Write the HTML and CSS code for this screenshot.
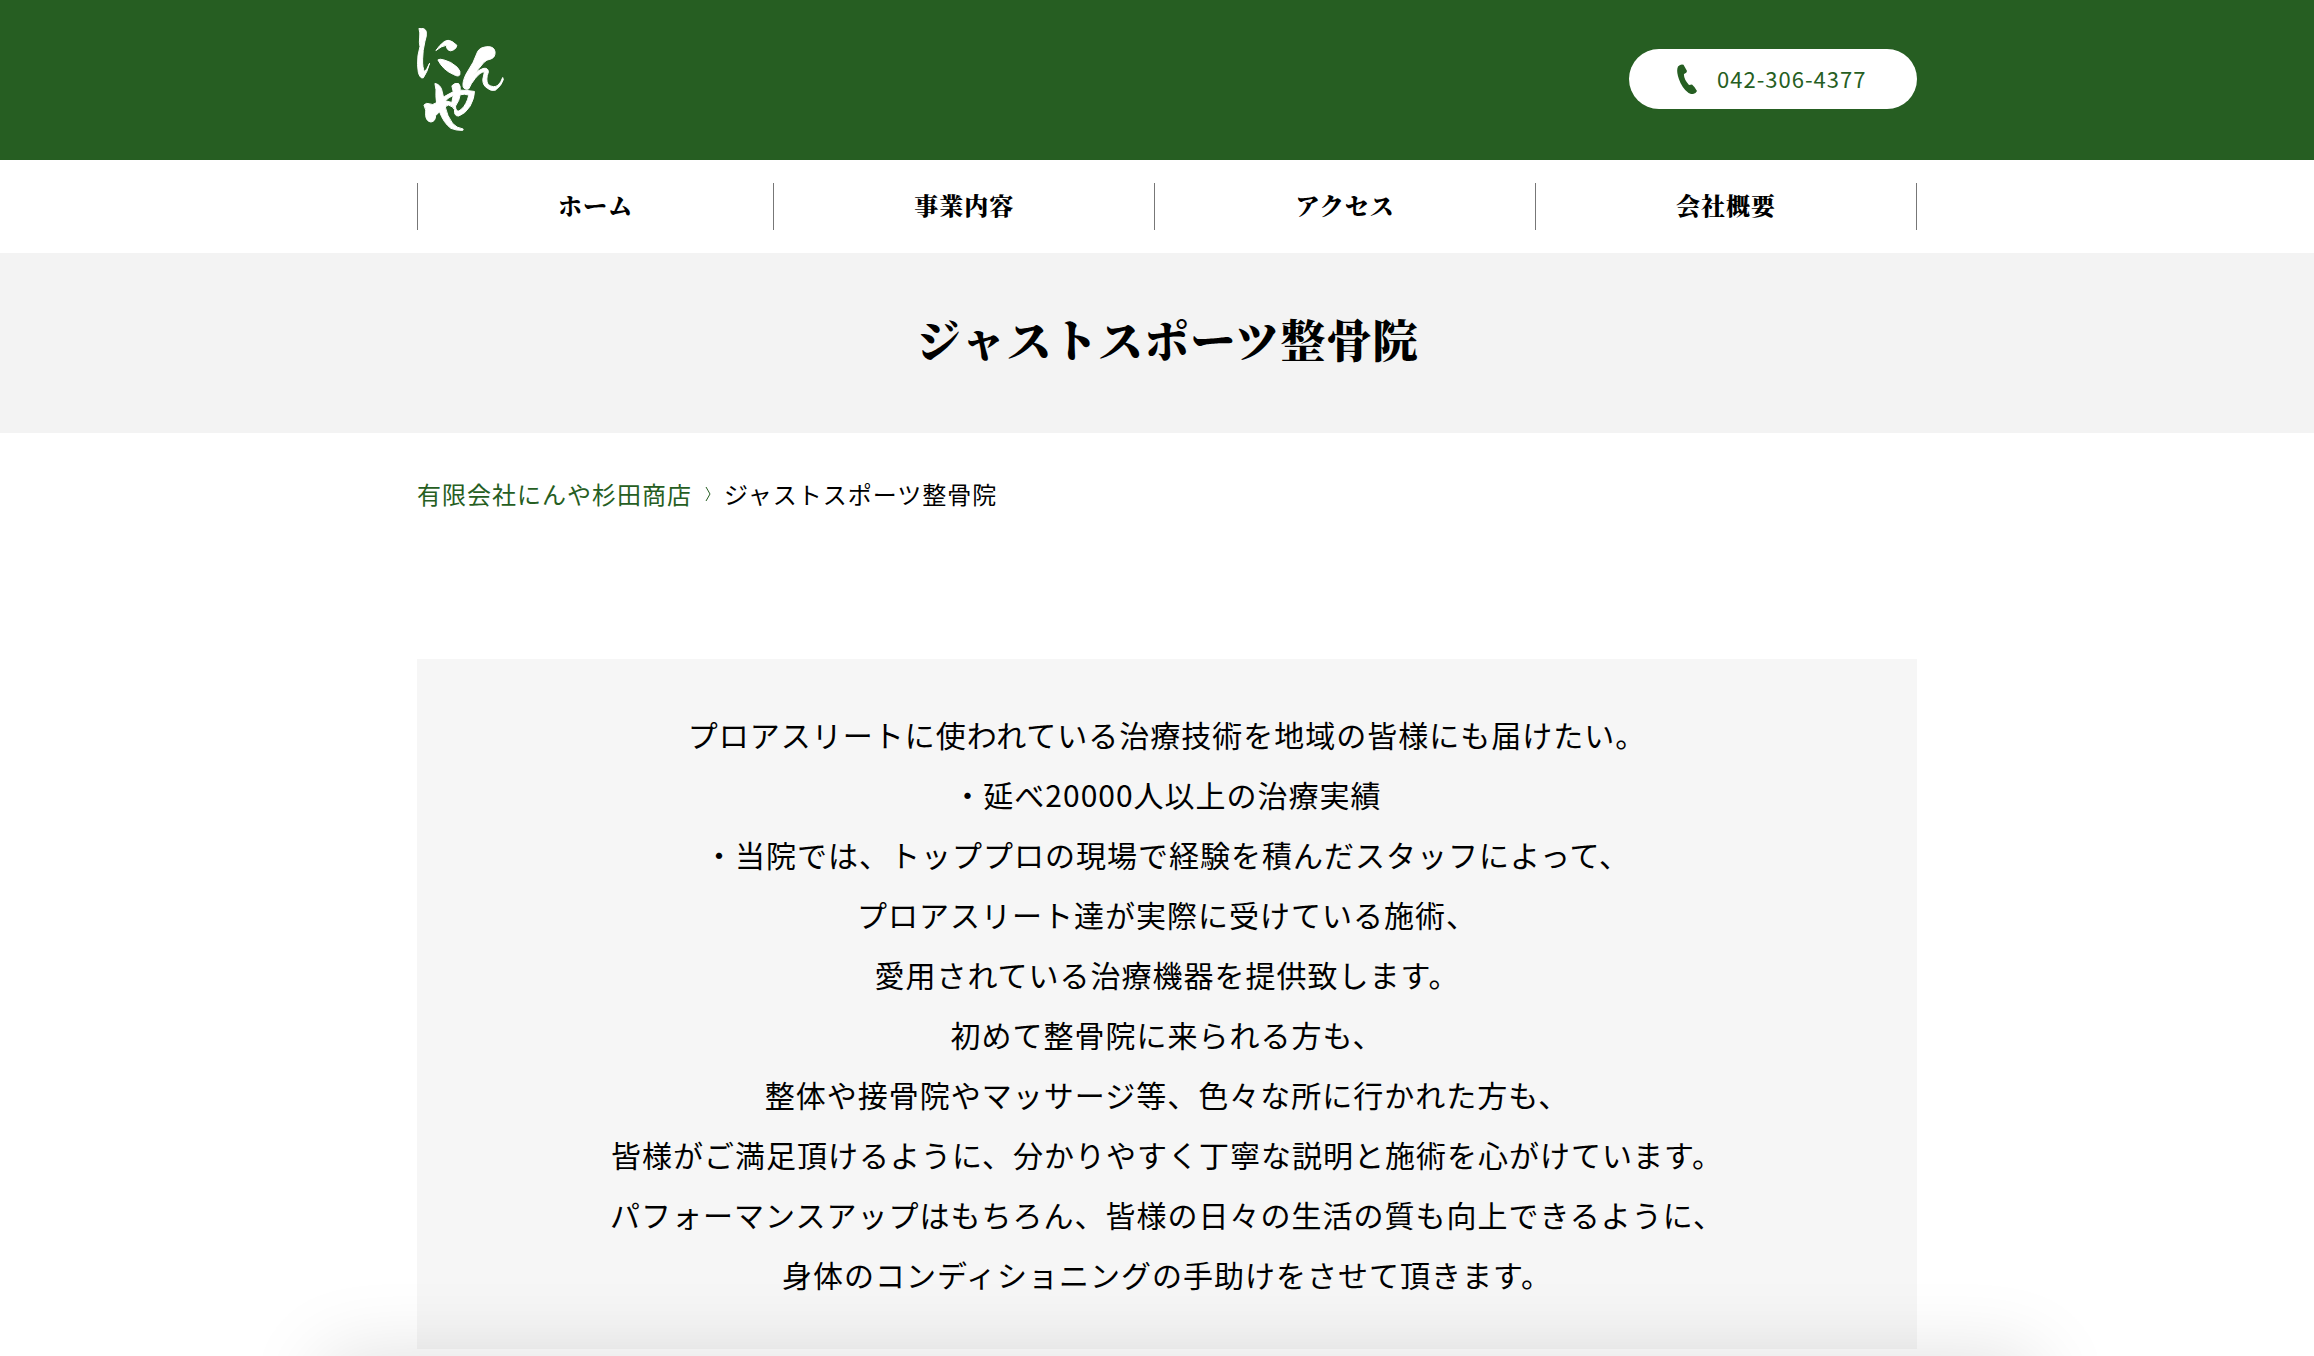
FILE: index.html
```html
<!DOCTYPE html>
<html lang="ja">
<head>
<meta charset="utf-8">
<meta name="viewport" content="width=device-width, initial-scale=1">
<title>ジャストスポーツ整骨院</title>
<link rel="stylesheet" href="styles.css">
</head>
<body>
<header class="header">
  <div class="container header-inner">
    <a class="logo" href="#" aria-label="にんや">
      <svg viewBox="50 52 260 310" width="87" height="103" fill="#fff" stroke="#fff" stroke-width="3" aria-hidden="true">
        <path d="M55 53Q74 51 77 63Q79 75 73 92Q66 120 66 145Q65 172 72 184Q78 178 87 158Q80 185 68 202Q58 205 53 185Q49 165 52 135L58 108Q55 95 57 82Q59 66 55 53Z"/>
        <path d="M106 120Q117 103 131 93Q142 85 155 93L169 104Q168 112 161 117Q149 124 143 118Q136 112 138 104Q122 106 106 120Z"/>
        <path d="M112 148Q117 144 130 148Q152 153 170 170Q182 182 178 193Q173 200 159 192Q127 178 112 148Z"/>
        <path d="M232 122Q240 109 264 108Q282 109 284 124Q285 140 272 145Q258 147 250 156Q237 172 218 195Q230 180 247 174Q263 170 264 184Q255 208 263 222Q280 234 293 224Q302 216 307 201L309 207Q303 227 285 239Q272 243 262 234Q247 226 247 207L252 184Q240 184 224 204Q211 220 205 235Q193 240 188 229Q185 216 196 192L218 155Z"/>
        <path d="M103 219Q117 221 123 236Q130 260 133 286Q140 318 156 339Q168 353 188 356L187 360Q167 361 151 354Q129 338 116 302Q105 278 106 256Q108 238 103 219Z"/>
        <path fill-rule="evenodd" d="M70 284Q77 276 86 280Q96 286 107 277Q132 255 158 244L154 226Q162 216 174 219Q181 226 179 239Q198 239 222 243Q222 263 209 287Q194 311 174 317Q160 317 162 298Q158 288 144 284Q132 287 117 304L105 316Q105 333 91 335Q77 333 75 315Q78 299 70 284ZM134 271L154 276L158 255Q146 260 134 271ZM179 253Q177 270 165 287Q165 302 175 302Q192 292 201 268L205 254Q192 249 179 253Z"/>
      </svg>
    </a>
    <a class="tel" href="tel:042-306-4377">
      <svg viewBox="0 0 20 30" width="20" height="30" fill="#265e22" aria-hidden="true">
        <path d="M1 2.500Q4-.5 6.500.8L10 7Q10 9 7 10Q6.500 15 12 21L15 20.500Q17.500 22.500 20 27Q18.500 30.500 14 30Q8 28 3.500 19Q-1.500 8 1 2.500Z"/>
      </svg>
      <span>042-306-4377</span>
    </a>
  </div>
</header>
<nav class="nav">
  <ul class="container nav-list">
    <li><a href="#">ホーム</a></li>
    <li><a href="#">事業内容</a></li>
    <li><a href="#">アクセス</a></li>
    <li><a href="#">会社概要</a></li>
  </ul>
</nav>
<div class="page-title"><h1 class="container">ジャストスポーツ整骨院</h1></div>
<main class="container">
  <ol class="breadcrumb">
    <li><a href="#">有限会社にんや杉田商店</a></li>
    <li class="separator" aria-hidden="true"><svg viewBox="0 0 6 14" width="6" height="14" fill="none" stroke="#265e22"><path d="M1 0L5 7L1 14"/></svg></li>
    <li>ジャストスポーツ整骨院</li>
  </ol>
  <p class="intro">プロアスリートに使われている治療技術を地域の皆様にも届けたい。<br>
・延べ20000人以上の治療実績<br>
・当院では、トッププロの現場で経験を積んだスタッフによって、<br>
プロアスリート達が実際に受けている施術、<br>
愛用されている治療機器を提供致します。<br>
初めて整骨院に来られる方も、<br>
整体や接骨院やマッサージ等、色々な所に行かれた方も、<br>
皆様がご満足頂けるように、分かりやすく丁寧な説明と施術を心がけています。<br>
パフォーマンスアップはもちろん、皆様の日々の生活の質も向上できるように、<br>
身体のコンディショニングの手助けをさせて頂きます。</p>
</main>
<div class="bottom-shade"></div>
</body>
</html>
```
FILE: styles.css
```css
* {
  box-sizing: border-box;
}

body {
  margin: 0;
  background: #fff;
  color: #000;
  font-family: "Noto Sans CJK JP", sans-serif;
  font-size: 24px;
  letter-spacing: 1px;
}

a {
  color: inherit;
  text-decoration: none;
}

ul,
ol {
  margin: 0;
  padding: 0;
  list-style: none;
}

.header,
.nav,
.page-title,
main {
  padding-left: 20px;
}

.container {
  width: 100%;
  max-width: 1500px;
  margin: 0 auto;
}

.header {
  background: #265e22;
}

.header-inner {
  display: flex;
  align-items: center;
  justify-content: space-between;
  min-height: 160px;
  padding-bottom: 2px;
}

.logo svg {
  display: block;
}

.tel {
  display: flex;
  align-items: center;
  gap: 20px;
  width: 288px;
  height: 60px;
  padding-left: 48px;
  border-radius: 30px;
  background: #fff;
  color: #265e22;
  font-size: 22px;
}

.tel span {
  padding-bottom: 2px;
}

.nav {
  padding-top: 23px;
  padding-bottom: 23px;
}

.nav-list {
  display: flex;
  border-left: 1px solid #777;
}

.nav-list li {
  flex: 1 1 auto;
  border-right: 1px solid #777;
  text-align: center;
}

.nav-list a {
  display: block;
  padding-bottom: 4px;
  line-height: 43px;
}

.nav-list a,
.page-title h1 {
  font-family: "Noto Serif CJK JP", "Noto Serif JP", "Noto Sans CJK JP", serif;
  font-weight: 900;
}

.page-title {
  padding-top: 54px;
  padding-bottom: 62px;
  background: #f3f3f3;
}

.page-title h1 {
  font-size: 45px;
  line-height: 64px;
  text-align: center;
}

main.container {
  max-width: 1520px;
}

.breadcrumb {
  display: flex;
  align-items: center;
  padding: 41px 0 145px;
  line-height: 40px;
}

.breadcrumb a {
  color: #265e22;
}

.separator {
  display: flex;
  justify-content: center;
  width: 32px;
}

.intro {
  margin: 0;
  padding: 45px 0;
  background: #f6f6f6;
  font-size: 30px;
  line-height: 60px;
  text-align: center;
}

.bottom-shade {
  position: fixed;
  right: 12%;
  bottom: -100px;
  left: 14%;
  height: 100px;
  box-shadow: 0 0 80px rgba(0, 0, 0, 0.13);
}
```
